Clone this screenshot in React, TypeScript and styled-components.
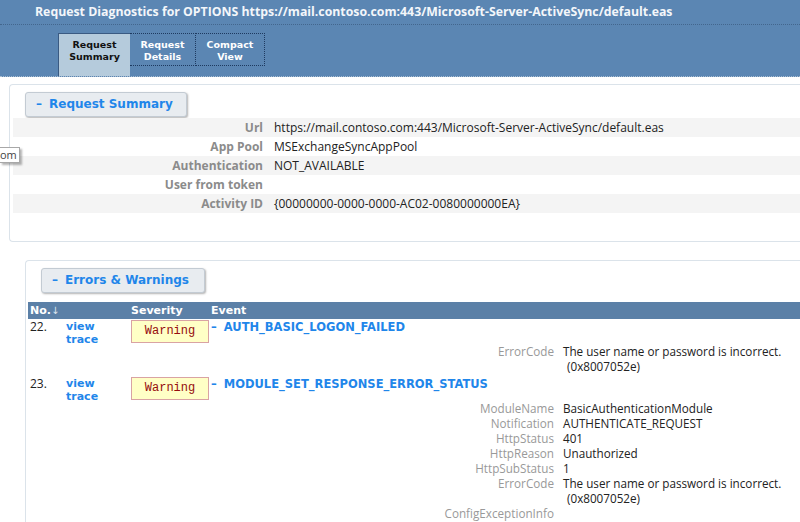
import React from 'react';
import styled, { createGlobalStyle } from 'styled-components';

const Global = createGlobalStyle`
  html, body { margin: 0; padding: 0; background: #fff; }
  body { width: 800px; height: 522px; overflow: hidden; font-family: "Open Sans", "Noto Sans", sans-serif; }
`;

const Page = styled.div`
  position: relative;
  width: 800px;
  height: 522px;
  overflow: hidden;
  background: #fff;
`;

const Header = styled.header`
  height: 76px;
  background: #5b86b3;
  border-bottom: 1px dotted #a9bed2;
  display: flex;
  flex-direction: column;
`;

const Title = styled.div`
  height: 24px;
  line-height: 24px;
  padding-left: 35px;
  border-bottom: 1px dotted #43668d;
  color: #f3f6fa;
  font-family: "Open Sans", sans-serif;
  font-weight: 700;
  font-size: 12.3px;
  white-space: nowrap;
`;

const Tabs = styled.nav`
  flex: 1;
  display: flex;
  align-items: flex-start;
  padding-left: 58px;
  margin-top: 8px;
`;

const Tab = styled.div<{ $active?: boolean; $w: number }>`
  box-sizing: border-box;
  width: ${p => p.$w}px;
  height: ${p => (p.$active ? '43px' : '33px')};
  padding-top: 5px;
  text-align: center;
  font-family: "DejaVu Sans", Verdana, sans-serif;
  font-weight: 700;
  font-size: 9.5px;
  line-height: 12px;
  color: ${p => (p.$active ? '#111' : '#fff')};
  background: ${p => (p.$active ? '#b5cbdc' : 'transparent')};
  border-top: 1px ${p => (p.$active ? 'solid #3a5a82' : 'dotted #1e3a60')};
  border-bottom: ${p => (p.$active ? 'none' : '1px dotted #1e3a60')};
  border-right: ${p => (p.$active ? 'none' : '1px dotted #1e3a60')};
  border-left: ${p => (p.$active ? '1px solid #3a5a82' : 'none')};
`;

const Card = styled.section<{ $left: number; $top: number; $h?: number }>`
  box-sizing: border-box;
  margin: ${p => p.$top}px 0 0 ${p => p.$left}px;
  ${p => (p.$h ? `height: ${p.$h}px;` : 'height: 400px;')}
  border: 1px solid #dbe3ea;
  border-right: none;
  ${p => (p.$h ? '' : 'border-bottom: none;')}
  border-radius: 4px 0 0 4px;
  padding-top: 7px;
`;

const SectionButton = styled.div<{ $w: number }>`
  box-sizing: border-box;
  width: ${p => p.$w}px;
  height: 25px;
  margin-left: 15px;
  padding-left: 10px;
  background: #e8ecf0;
  border: 1px solid #c3cbd3;
  border-radius: 3px;
  box-shadow: 1px 1px 2px rgba(0, 0, 0, 0.3);
  font-family: "DejaVu Sans", Verdana, sans-serif;
  font-weight: 700;
  font-size: 12px;
  line-height: 23px;
  color: #1f86ea;
  white-space: nowrap;
`;

const Toggle = styled.span<{ $gap: number }>`
  margin-right: ${p => p.$gap}px;
`;

const SummaryRows = styled.div`
  margin: 1px 0 0 3px;
  display: flex;
  flex-direction: column;
`;

const SummaryRow = styled.div<{ $shaded?: boolean }>`
  display: grid;
  grid-template-columns: 250px 1fr;
  column-gap: 11px;
  height: 19px;
  line-height: 19px;
  background: ${p => (p.$shaded ? '#f4f4f4' : 'transparent')};
  font-size: 12px;
  white-space: nowrap;
`;

const SummaryLabel = styled.div`
  text-align: right;
  font-weight: 700;
  color: #8b8b8b;
`;

const SummaryValue = styled.div`
  color: #222;
`;

const Table = styled.div`
  margin: 9px 0 0 2px;
`;

const Cols = `
  display: grid;
  grid-template-columns: 38px 65px 80px 1fr;
`;

const HeadRow = styled.div`
  ${Cols}
  height: 17px;
  line-height: 17px;
  background: #5b80a7;
  color: #fff;
  font-family: "DejaVu Sans", Verdana, sans-serif;
  font-weight: 700;
  font-size: 11px;
  white-space: nowrap;
`;

const HeadCell = styled.div<{ $pad?: number }>`
  padding-left: ${p => p.$pad ?? 0}px;
`;

const Arrow = styled.span`
  font-weight: 400;
  color: #dfe7f0;
  font-size: 10px;
`;

const EventRow = styled.div`
  ${Cols}
  grid-template-rows: 23px auto;
  padding-top: 1px;
  margin-bottom: 2px;
`;

const Num = styled.div`
  padding-left: 2px;
  font-size: 12px;
  line-height: 14px;
  color: #222;
`;

const TraceCell = styled.div`
  grid-row: 1 / span 2;
  grid-column: 2;
`;

const TraceLink = styled.a`
  display: block;
  width: 40px;
  font-family: "DejaVu Sans", Verdana, sans-serif;
  font-weight: 700;
  font-size: 11px;
  line-height: 13px;
  color: #1f86ea;
  text-decoration: none;
`;

const Severity = styled.div`
  box-sizing: border-box;
  width: 78px;
  height: 23px;
  background: #ffffc6;
  border: 1px solid #d9a3a3;
  text-align: center;
  font-family: "Liberation Mono", "Courier New", monospace;
  font-size: 12px;
  line-height: 21px;
  color: #960d0d;
`;

const EventName = styled.div`
  font-family: "DejaVu Sans", Verdana, sans-serif;
  font-weight: 700;
  font-size: 11.5px;
  line-height: 14px;
  color: #1f86ea;
  white-space: nowrap;
`;

const Details = styled.div`
  grid-row: 2;
  grid-column: 4;
  margin-top: 1px;
  display: grid;
  grid-template-columns: 343px 1fr;
  column-gap: 9px;
  font-size: 11.7px;
  line-height: 15px;
  white-space: nowrap;
`;

const DetailLabel = styled.div`
  text-align: right;
  color: #999;
`;

const DetailValue = styled.div`
  color: #222;
`;

const Wrapped = styled.div`
  padding-left: 4px;
`;

const Tooltip = styled.div`
  position: absolute;
  left: 0;
  top: 147px;
  box-sizing: border-box;
  width: 20px;
  height: 16px;
  background: #fff;
  border: 1px solid #a8a8a8;
  border-left: none;
  box-shadow: 2px 2px 2px rgba(0, 0, 0, 0.3);
  font-size: 11px;
  line-height: 14px;
  color: #444;
  overflow: hidden;
`;

const summary: [string, string][] = [
  ['Url', 'https://mail.contoso.com:443/Microsoft-Server-ActiveSync/default.eas'],
  ['App Pool', 'MSExchangeSyncAppPool'],
  ['Authentication', 'NOT_AVAILABLE'],
  ['User from token', ''],
  ['Activity ID', '{00000000-0000-0000-AC02-0080000000EA}'],
];

type Detail = [string, string, string?];

const events: { no: string; name: string; details: Detail[] }[] = [
  {
    no: '22.',
    name: 'AUTH_BASIC_LOGON_FAILED',
    details: [['ErrorCode', 'The user name or password is incorrect.', '(0x8007052e)']],
  },
  {
    no: '23.',
    name: 'MODULE_SET_RESPONSE_ERROR_STATUS',
    details: [
      ['ModuleName', 'BasicAuthenticationModule'],
      ['Notification', 'AUTHENTICATE_REQUEST'],
      ['HttpStatus', '401'],
      ['HttpReason', 'Unauthorized'],
      ['HttpSubStatus', '1'],
      ['ErrorCode', 'The user name or password is incorrect.', '(0x8007052e)'],
      ['ConfigExceptionInfo', ''],
    ],
  },
];

export default function App() {
  return (
    <Page>
      <Global />
      <Header>
        <Title>Request Diagnostics for OPTIONS https://mail.contoso.com:443/Microsoft-Server-ActiveSync/default.eas</Title>
        <Tabs>
          <Tab $active $w={72}>Request<br />Summary</Tab>
          <Tab $w={66}>Request<br />Details</Tab>
          <Tab $w={69}>Compact<br />View</Tab>
        </Tabs>
      </Header>

      <Card $left={9} $top={7} $h={158}>
        <SectionButton $w={162}><Toggle $gap={7}>–</Toggle>Request Summary</SectionButton>
        <SummaryRows>
          {summary.map(([k, v], i) => (
            <SummaryRow key={k} $shaded={i % 2 === 0}>
              <SummaryLabel>{k}</SummaryLabel>
              <SummaryValue>{v}</SummaryValue>
            </SummaryRow>
          ))}
        </SummaryRows>
      </Card>

      <Card $left={25} $top={18}>
        <SectionButton $w={164}><Toggle $gap={7}>–</Toggle>Errors &amp; Warnings</SectionButton>
        <Table>
          <HeadRow>
            <HeadCell $pad={2}>No.<Arrow>↓</Arrow></HeadCell>
            <HeadCell />
            <HeadCell>Severity</HeadCell>
            <HeadCell>Event</HeadCell>
          </HeadRow>
          {events.map(ev => (
            <EventRow key={ev.no}>
              <Num>{ev.no}</Num>
              <TraceCell><TraceLink href="#">view trace</TraceLink></TraceCell>
              <div><Severity>Warning</Severity></div>
              <EventName><Toggle $gap={7}>–</Toggle>{ev.name}</EventName>
              <Details>
                {ev.details.map(([k, v, extra]) => (
                  <React.Fragment key={k}>
                    <DetailLabel>{k}</DetailLabel>
                    <DetailValue>
                      {v}
                      {extra && <Wrapped>{extra}</Wrapped>}
                    </DetailValue>
                  </React.Fragment>
                ))}
              </Details>
            </EventRow>
          ))}
        </Table>
      </Card>

      <Tooltip>om</Tooltip>
    </Page>
  );
}
